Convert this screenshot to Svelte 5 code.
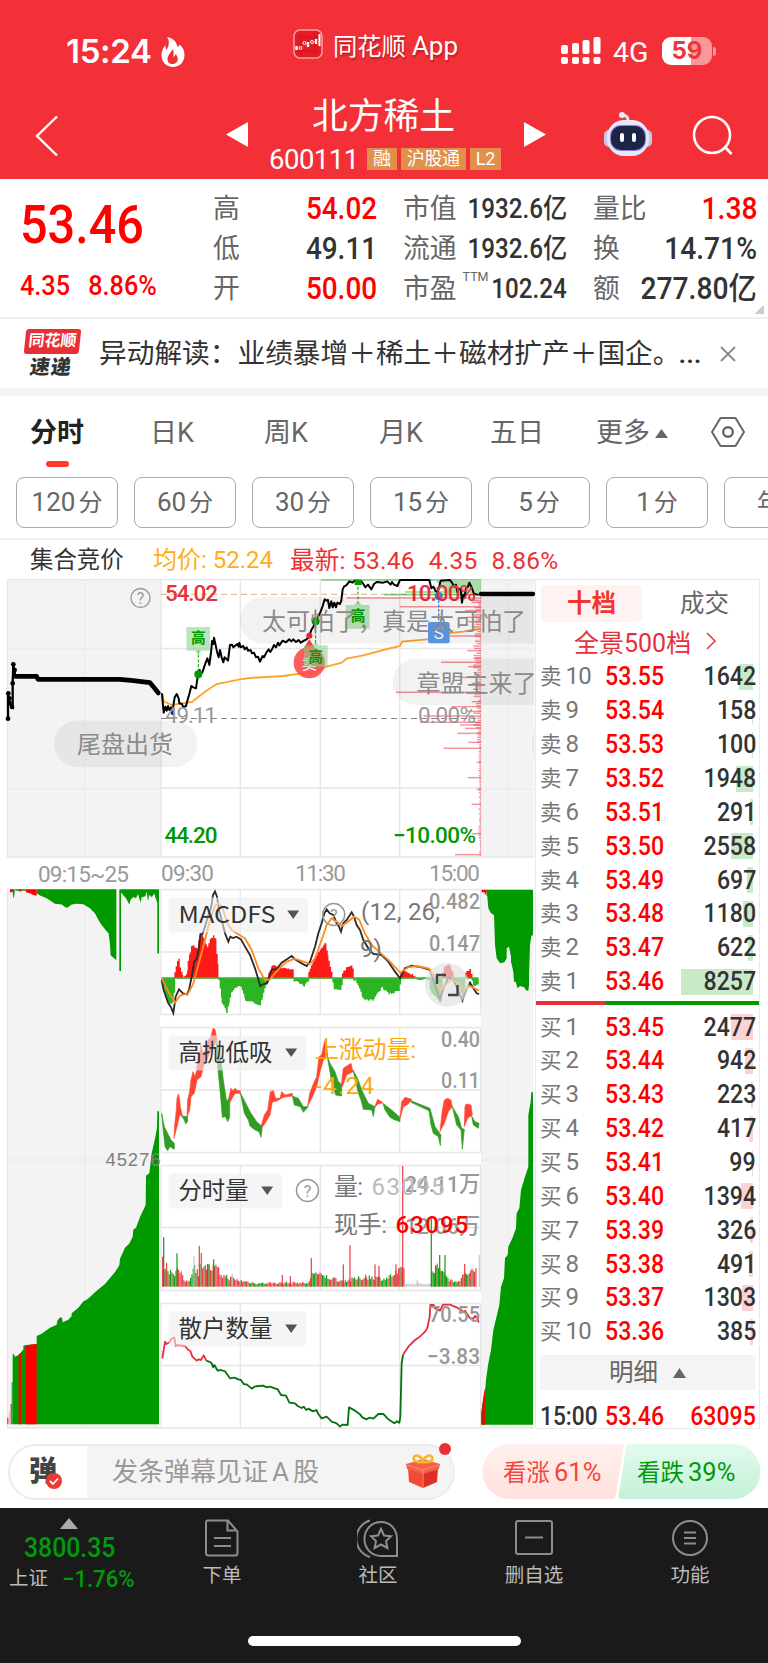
<script>
  const periods = ['120分', '60分', '30分', '15分', '5分', '1分', '年K'];

  const sells = [
    [10, '53.55', 1642], [9, '53.54', 158], [8, '53.53', 100], [7, '53.52', 1948], [6, '53.51', 291],
    [5, '53.50', 2558], [4, '53.49', 697], [3, '53.48', 1180], [2, '53.47', 622], [1, '53.46', 8257],
  ];
  const buys = [
    [1, '53.45', 2477], [2, '53.44', 942], [3, '53.43', 223], [4, '53.42', 417], [5, '53.41', 99],
    [6, '53.40', 1394], [7, '53.39', 326], [8, '53.38', 491], [9, '53.37', 1303], [10, '53.36', 385],
  ];
  const barWidth = (qty) => Math.max(1, (qty / 8257) * 72);

  // small deterministic noise, so the bars do not jump between renders
  let seed = 7;
  function noise() {
    seed = (seed * 16807) % 2147483647;
    return seed / 2147483647;
  }

  // chart series are in thirds of a pixel
  const price = '36,370 38,395 41,428 46,410 50,422 54,408 58,420 63,412 67,432 71,400 74,382 80,372 86,385 88,400 96,402 100,412 108,408 112,392 118,372 124,348 130,352 138,355 144,313 149,300 153,312 158,305 166,280 172,265 178,285 184,240 186,213 190,222 192,203 198,230 201,245 206,262 210,240 215,262 220,277 224,262 228,266 234,272 240,225 246,224 250,232 262,222 266,230 268,218 272,232 280,228 284,238 290,232 294,242 302,240 306,250 312,248 318,262 324,260 330,275 338,258 342,262 350,246 356,238 361,246 366,238 372,225 378,232 384,218 388,226 398,212 408,217 418,208 424,214 430,208 438,216 446,210 452,218 462,212 470,208 478,197 484,180 490,170 497,152 504,140 510,130 518,108 524,88 530,92 534,90 538,114 544,94 548,112 553,98 558,112 562,98 570,102 574,92 578,58 582,50 590,45 598,34 608,38 614,32 634,34 640,42 646,52 654,44 664,58 672,42 680,36 700,38 712,34 722,44 726,36 732,44 742,48 750,30 838,30 844,55 850,50 856,62 862,66 868,48 872,32 900,30 906,38 912,50 918,44 922,66 926,56 932,58 936,98 940,74 944,78 948,55 954,50 958,38 964,50 972,72 986,74';
  const average = '36,370 42,395 66,405 110,398 125,396 140,385 165,365 185,352 200,342 270,328 300,324 350,321 400,318 440,312 480,310 530,290 575,278 590,266 640,256 700,240 750,228 756,215 830,208 850,205 870,192 940,185 970,180 990,177';

  const profile = [
    [84, 590], [97, 965], [110, 750], [122, 945], [142, 950], [155, 955], [178, 972], [198, 855], [242, 952],
    [265, 970], [277, 873], [290, 955], [322, 935], [340, 965], [367, 738], [395, 965], [410, 905], [424, 950],
    [438, 820], [457, 810], [465, 930], [475, 945], [490, 922], [517, 955], [535, 880], [577, 980], [623, 954],
    [658, 980], [703, 965], [791, 965], [854, 915],
  ];
  const ticks = Array.from({ length: 108 }, (_, i) => {
    const y = 84 + i * 7.2;
    return [y, 990 - noise() * (y < 520 ? 22 : 5)];
  });
  const profileTop = [[30, 513], [36, 860], [42, 868], [48, 875], [54, 850], [60, 880], [66, 765], [74, 703]];

  function columns(shape, step = 4) {
    const pts = shape.split(' ').map((p) => p.split(',').map(Number));
    let d = '';
    for (let i = 0; i < pts.length - 1; i++) {
      const [x0, y0] = pts[i];
      const [x1, y1] = pts[i + 1];
      for (let x = x0; x < x1; x += step) {
        const y = y0 + ((y1 - y0) * (x - x0)) / (x1 - x0) + (noise() - 0.5) * 6;
        d += `M${x} 295V${y.toFixed(1)}h${step + 0.3}V295z`;
      }
    }
    return d;
  }
  const macdUp = [
    '58,275 66,242 70,238 74,260 80,285 88,290 96,275 98,240 104,215 110,195 118,200 126,205 134,160 140,165 148,185 156,200 164,180 174,168 180,175 186,250 190,295',
    '340,275 350,255 375,262 395,265 412,270 416,290',
    '460,272 475,240 490,215 500,200 510,190 516,225 524,260 532,290',
    '561,278 575,262 588,258 594,272',
    '736,278 750,272 785,293',
    '862,275 868,262 880,255 892,275 895,290',
    '930,280 935,275 944,268 950,285',
  ].map((s) => columns(s)).join('');
  const macdDown = [
    '20,300 30,350 40,370 52,368 58,320',
    '190,300 200,370 214,398 220,370 226,340 240,325 256,318 264,340 270,360 290,365 300,372 314,375 320,350 330,315 340,300',
    '416,302 440,312 446,318 460,300', '532,310 536,325 555,330 561,305',
    '594,300 600,300 612,325 622,355 640,360 655,360 665,340 680,322 700,342 715,338 730,330 736,305',
    '785,298 820,300 825,335 855,365 862,305', '895,302 905,310 922,350 930,305', '950,300 955,318 970,315',
  ].map((s) => columns(s)).join('');
  const dif = '20,300 26,330 32,348 40,370 48,382 55,399 62,350 72,328 84,340 96,343 102,330 110,290 118,245 126,235 132,200 136,165 142,162 150,140 160,105 168,85 174,45 180,34 186,50 192,90 200,120 210,160 220,185 226,170 234,174 244,170 258,178 270,200 285,225 300,265 316,318 325,312 336,310 346,280 352,268 364,268 380,248 400,235 410,228 420,238 440,250 455,258 465,245 480,200 490,160 500,130 508,100 515,88 524,100 535,105 545,130 552,140 558,155 565,130 575,120 590,97 597,110 605,135 615,150 625,180 640,205 655,222 680,225 700,245 720,275 735,295 750,265 770,257 800,262 825,270 835,300 855,360 865,325 880,292 895,300 905,320 922,362 935,325 945,308 955,325 965,340 972,342';
  const dea = '20,295 40,335 60,368 75,347 100,340 115,310 130,255 150,180 165,120 180,78 190,70 202,80 215,125 230,150 250,163 270,175 290,210 310,265 330,300 345,298 370,268 395,245 420,236 445,245 465,252 480,235 500,180 515,135 530,115 545,125 560,138 575,128 597,110 612,118 630,160 650,195 675,218 700,240 735,278 760,262 785,258 820,265 840,290 858,330 875,310 890,298 910,310 925,330 945,318 972,332';

  const swingUp = [
    '57,775 59,735 64,690 66,655 70,642 74,660 76,680 82,708 74,705 66,740',
    '96,710 98,660 104,635 108,600 114,575 120,590 125,572 128,540 134,520 138,495 144,520 152,510 160,480 168,470 174,445 180,448 186,480 176,500 165,520 155,540 145,560 138,590 126,600 118,640 108,650 104,690',
    '222,650 228,625 234,632 240,625 248,632 256,632 256,640 240,640 224,668',
    '318,740 328,705 338,690 346,635 355,632 362,655 375,655 380,635 390,645 412,640 412,648 384,652 368,662 352,666 345,705 325,738',
    '458,678 464,640 476,610 485,590 492,530 500,525 505,500 512,475 518,525 505,540 495,575 485,620 470,655',
    '560,605 565,565 580,555 588,550 594,575 575,585 562,620',
    '658,683 668,658 684,668 668,673',
    '735,715 740,665 750,652 770,658 760,672 745,680',
    '855,755 862,690 868,660 878,655 888,660 892,680 880,695 868,730',
    '928,740 930,680 934,672 948,675 952,705 938,715',
  ];
  const swingDown = [
    '20,700 28,740 38,760 48,780 58,790 58,808 44,800 38,812 30,800 24,745',
    '80,708 98,710 98,724 92,732 88,720',
    '184,480 195,520 205,600 215,665 224,650 224,712 218,725 212,710 202,712 196,640 188,560',
    '256,638 270,665 285,695 305,725 322,740 318,772 312,755 300,750 285,738 280,720 268,700',
    '412,648 430,655 445,680 460,680 445,697 436,680 418,675',
    '516,525 525,550 540,575 550,605 560,612 560,648 542,645 530,605',
    '594,570 610,600 620,630 640,670 660,680 655,710 650,690 625,688 618,660 610,640',
    '684,670 710,690 735,712 735,725 715,718 705,712 690,690',
    '768,662 825,685 840,740 858,765 856,797 850,770 835,760 828,735 822,692 768,667',
    '892,680 910,710 920,745 928,748 922,808 918,750 905,735',
    '950,708 960,725 972,730 970,745 955,735',
  ];

  // turnover per minute: envelope of [x, height] plus the outstanding spikes
  const envelope = [
    [20, 85], [40, 60], [60, 50], [70, 60], [85, 22], [100, 18], [112, 70], [120, 70], [128, 40], [134, 100],
    [160, 65], [180, 65], [200, 40], [240, 24], [300, 12], [420, 14], [460, 12], [470, 55], [490, 40], [520, 32],
    [560, 20], [640, 34], [690, 28], [745, 60], [749, 10], [826, 10], [830, 65], [866, 62], [875, 25], [910, 20],
    [930, 45], [962, 60],
  ];
  const spikes = [
    [26, 148, '#009900'], [66, 100, '#009900'], [117, 92, '#c4c4c4'], [133, 122, '#e8303a'], [158, 68, '#009900'],
    [176, 82, '#009900'], [232, 38, '#c4c4c4'], [382, 35, '#e8303a'], [406, 32, '#e8303a'], [469, 86, '#e8303a'],
    [565, 67, '#e8303a'], [585, 124, '#e8303a'], [632, 36, '#e8303a'], [660, 67, '#e8303a'], [672, 62, '#e8303a'],
    [723, 67, '#e8303a'], [743, 362, '#e8303a'], [787, 20, '#c4c4c4'], [829, 210, '#009900'], [842, 64, '#009900'],
    [854, 95, '#009900'], [870, 95, '#009900'], [929, 68, '#e8303a'], [973, 95, '#c4c4c4'],
  ];
  const turnover = [];
  for (let x = 21; x < 963; x += 4) {
    const k = envelope.findIndex((e) => e[0] > x);
    const [x0, h0] = envelope[k - 1];
    const [x1, h1] = envelope[k];
    const h = (h0 + ((h1 - h0) * (x - x0)) / (x1 - x0)) * (0.6 + noise() * 0.5);
    const red = noise() > 0.45;
    turnover.push([x, h, x > 748 && x < 827 ? '#c4c4c4' : red ? '#e8303a' : '#009900']);
  }

  const retailGreen = '154,632 165,636 170,640 174,652 178,645 188,662 198,660 210,664 225,685 238,683 250,688 258,690 266,702 276,704 290,716 298,710 310,708 325,707 335,712 345,710 368,718 378,735 393,737 403,758 420,760 428,768 440,774 446,770 454,780 460,776 474,784 484,780 490,792 500,805 515,800 530,815 545,820 555,830 562,824 578,825 582,772 600,782 615,793 622,802 635,808 643,803 655,806 670,792 685,792 700,808 712,816 718,820 726,814 733,818 736,800 740,640 744,615';

  // grid frames of the four lower panels: top, middle, bottom
  const frames = [
    [889.5, 952, 1014.5],
    [1027.5, 1090, 1152.5],
    [1165.5, 1227.5, 1290.5],
    [1303.5, 1365.5, 1428],
  ];
  const scaleLabels = [
    ['0.482', 909, 51], ['0.147', 950.5, 51], ['0.40', 1047, 39], ['0.11', 1088, 39],
    ['24.11万', 1192, 75], ['12.06万', 1233.5, 75], ['70.55', 1322, 51], ['−3.83', 1364, 53],
  ];
  const pickers = [
    ['MACDFS', 897.5, 139.5, 97], ['高抛低吸', 1035.5, 137.5, 94], ['分时量', 1173.5, 113.5, 70], ['散户数量', 1311.5, 137.5, 94],
  ];
</script>

{#snippet level(side, n, cost, qty)}
  <li class="level {side === '卖' ? 'sell' : 'buy'}">
    <span class="level-name">{side}<i>{n}</i></span>
    <span class="level-price">{cost}</span>
    <span class="level-bar" style:width="{barWidth(qty)}px"></span>
    <span class="level-qty">{qty}</span>
  </li>
{/snippet}

<main class="screen">
  <header class="top">
    <div class="status">
      <div class="clock">
        <span>15:24</span>
        <svg width="24" height="30" viewBox="0 0 24 30"><path fill="#fff" d="M6 0c6 1 10 5 10.500 10.500 1-1 1.500-1.500 1.800-3C22 10 23.500 14 23.500 18c0 7-5 12-11.500 12S.5 25 .5 18.500c0-5 2-7.500 4-10.500 0 2 0 3 1 5C8 9 9 4 6 0z" /><path fill="#f33038" d="M12 12c-3.500 5-5.500 7-5.500 10.500 0 3 2.300 4.500 5 4.500s5.300-1.500 5.300-5c0-2-1-4-2.300-5-.5 2-1 2.500-2 3 0-3 .5-5-.5-8z" /></svg>
      </div>
      <div class="app-name">
        <svg width="30" height="30" viewBox="0 0 30 30"><rect x="1" y="1" width="28" height="28" rx="6" fill="#e51c24" stroke="#f9a0a0" stroke-width="1.500" /><path stroke="#c9141c" d="M5 22h20M5 8h20M8 4v22M22 4v22" /><g stroke="#fff" fill="none"><path stroke-width="2.400" d="M3.500 17v4M15 13v5M23 10v5" /><circle cx="7.500" cy="19" r="1.500" /><circle cx="11.500" cy="14" r="1.500" /><circle cx="19" cy="13" r="1.500" /><path d="M26.500 5v12" stroke-width="2" /></g></svg>
        <span>同花顺<b>App</b></span>
      </div>
      <div class="radio">
        <svg width="40" height="28" viewBox="0 0 40 28" fill="#fff">
          <rect x="0" y="8" width="7" height="9" rx="2" /><rect x="11" y="6" width="7" height="11" rx="2" /><rect x="21.500" y="3" width="7" height="14" rx="2" /><rect x="32.500" y="0" width="7" height="17" rx="2" />
          <rect x="0" y="20" width="7" height="7" rx="2" /><rect x="11" y="20" width="7" height="7" rx="2" /><rect x="21.500" y="20" width="7" height="7" rx="2" /><rect x="32.500" y="20" width="7" height="7" rx="2" />
        </svg>
        <span class="network">4G</span>
        <span class="battery">59</span>
        <i class="battery-cap"></i>
      </div>
    </div>

    <div class="nav">
      <svg class="back" width="24" height="42" viewBox="0 0 24 42"><path d="M22 1.500L2 21l20 19.500" fill="none" stroke="#fff" stroke-width="2.400" /></svg>
      <svg class="prev" width="22" height="25"><path fill="#fff" d="M22 0v25L0 12.500z" /></svg>
      <div class="stock">
        <h1>北方稀土</h1>
        <p><span class="code">600111</span><em>融</em><em>沪股通</em><em>L2</em></p>
      </div>
      <svg class="next" width="22" height="25"><path fill="#fff" d="M0 0v25l22-12.500z" /></svg>
      <svg class="robot" width="48" height="45" viewBox="0 0 48 45">
        <path d="M24 9c0-4-1-5-5-6" fill="none" stroke="#dfe4f7" stroke-width="3" /><circle cx="18" cy="3" r="3" fill="#e9ecfa" />
        <rect x="0" y="18" width="10" height="17" rx="5" fill="#c3c9e8" /><rect x="38" y="18" width="10" height="17" rx="5" fill="#c3c9e8" />
        <rect x="3" y="8" width="42" height="36" rx="17" fill="#e6e9f8" /><rect x="6" y="13" width="36" height="26" rx="11" fill="#8b7bf0" />
        <rect x="7" y="14" width="34" height="24" rx="10" fill="#1c2545" /><rect x="16" y="21" width="4" height="9" rx="2" fill="#fff" /><rect x="28" y="21" width="4" height="9" rx="2" fill="#fff" />
      </svg>
      <svg class="search" width="42" height="42" viewBox="0 0 42 42" fill="none" stroke="#fff" stroke-width="2.600"><circle cx="20" cy="20" r="18" /><path d="M33 32l6.500 7" /></svg>
    </div>
  </header>

  <section class="quote">
    <div class="last">
      <strong>53.46</strong>
      <p><span>4.35</span><span>8.86%</span></p>
    </div>
    <dl class="c1">
      <dt>高</dt><dd class="red">54.02</dd>
      <dt>低</dt><dd>49.11</dd>
      <dt>开</dt><dd class="red">50.00</dd>
    </dl>
    <dl class="c2">
      <dt>市值</dt><dd>1932.6亿</dd>
      <dt>流通</dt><dd>1932.6亿</dd>
      <dt>市盈<sup>TTM</sup></dt><dd>102.24</dd>
    </dl>
    <dl class="c3">
      <dt>量比</dt><dd class="red">1.38</dd>
      <dt>换</dt><dd>14.71%</dd>
      <dt>额</dt><dd>277.80亿</dd>
    </dl>
    <i class="corner"></i>
  </section>

  <section class="news">
    <div class="news-logo"><b>同花顺</b><span>速递</span></div>
    <p>异动解读：业绩暴增＋稀土＋磁材扩产＋国企。<span>...</span></p>
    <svg width="16" height="16"><path d="M1 1l14 14M15 1L1 15" stroke="#888" stroke-width="1.800" /></svg>
  </section>

  <nav class="tabs">
    <span class="active">分时</span><span>日K</span><span>周K</span><span>月K</span><span>五日</span>
    <span class="more">更多<svg width="13" height="9"><path fill="#666" d="M6.500 0L13 9H0z" /></svg></span>
    <svg width="34" height="32" viewBox="0 0 34 32" fill="none" stroke="#666" stroke-width="2"><path d="M9.500 2h15L33 16l-8.500 14h-15L1 16z" stroke-linejoin="round" /><circle cx="17" cy="16" r="4.800" stroke-width="2.400" /></svg>
  </nav>

  <div class="periods">
    {#each periods as period}
      <button type="button">{period.replace(/\D/g, '')}<i>{period.replace(/\d/g, '')}</i></button>
    {/each}
  </div>

  <p class="legend">
    <span class="auction">集合竞价</span>
    <span class="avg">均价: 52.24</span>
    <span class="now">最新: 53.46</span>
    <span class="now">4.35</span>
    <span class="now">8.86%</span>
  </p>

  <div class="board">
    <svg class="charts" width="535" height="852" viewBox="0 579 535 852">
      <rect x="7" y="579" width="154" height="278" fill="#f3f3f3" />
      <rect x="481" y="579" width="53.500" height="278" fill="#f3f3f3" />
      <rect x="7" y="889" width="153" height="539" fill="#f3f3f3" />
      <rect x="481" y="889" width="52.500" height="539" fill="#f3f3f3" />
      <g class="grid">
        <path d="M7 579.500H534M7 857H534M161 579V857M481 579V857M7.500 579V857M240.300 579V857M320.300 579V857M399.700 579V857M161 648.500H481M161 788H481" />
        {#each frames as [top, mid, bottom]}
          <path d="M161 {top}H480.500V{bottom}H161zM161 {mid}H480.500M240.300 {top}V{bottom}M320.300 {top}V{bottom}M399.700 {top}V{bottom}" />
        {/each}
        <path d="M7.500 889V1428M7 1428H161M481 1428H534" />
        <path stroke-dasharray="2 2" d="M85 579V857M508.700 579V857M7 649H161M7 789H161M481 649H534M481 789H534M85 889V1428M508.700 889V1428M7 1160H161M481 1160H534" />
      </g>

      <!-- opening auction -->
      <g transform="translate(0 570) scale(.33333)" stroke="#000" fill="none">
        <path stroke-width="7" d="M24 446V370L30 400L38 410V340L40 283L46 318" />
        <path stroke-width="14" stroke-linecap="round" stroke-linejoin="round" d="M46 319H110L114 328H360L400 332L450 338L460 350L475 369" />
        {#each [[24, 446], [25, 370], [28, 385], [29, 400], [36, 411], [38, 340], [40, 283], [44, 300], [43, 318]] as [x, y]}
          <circle cx={x} cy={y} r="7" fill="#000" stroke="none" />
        {/each}
      </g>
      <circle cx="140.500" cy="598" r="9.500" fill="none" stroke="#999" stroke-width="1.300" />
      <text class="mark" x="140.500" y="603.500">?</text>

      <!-- intraday price -->
      <path d="M161 594.300H481" stroke="#dcb183" stroke-dasharray="6 4" fill="none" />
      <path d="M161 718.500H476" stroke="#888" stroke-dasharray="6 4" fill="none" />
      <g transform="translate(150 570) scale(.33333)">
        <g stroke="#ee2030" stroke-opacity=".48" stroke-width="4.500">
          {#each profile as [y, x]}<path d="M{x} {y}H993" />{/each}
          {#each ticks as [y, x]}<path d="M{x} {y}H993" />{/each}
        </g>
        <g stroke="#009900" stroke-opacity=".45" stroke-width="5">
          {#each profileTop as [y, x]}<path d="M{x} {y}H993" />{/each}
        </g>
        <polyline points={average} fill="none" stroke="#ffa32b" stroke-width="5.500" />
        <polyline points={price} fill="none" stroke="#000" stroke-width="6" stroke-linejoin="round" />
        <path d="M993 72H1149" stroke="#000" stroke-width="13" stroke-linecap="round" />
        <path d="M145 240V305M497 154V226M624 37V105" stroke="#009900" stroke-width="3" stroke-dasharray="9 5" />
        <path d="M866 78V156" stroke="#3f82e0" stroke-width="4" stroke-dasharray="8 5" />
        <circle cx="145" cy="313" r="12" fill="#009900" /><circle cx="497" cy="154" r="12" fill="#009900" />
        <rect x="614" y="29" width="21" height="16" fill="#009900" /><circle cx="478" cy="197" r="9" fill="#ff2020" />
        <circle cx="866" cy="78" r="12" fill="#4377c4" />
        <path d="M478 207l18 30h-36z" fill="#fb4040" /><circle cx="478" cy="278" r="47" fill="#fb4a4a" opacity=".9" />
        <text x="478" y="296" font-size="46" fill="#fff" text-anchor="middle">卖</text>
        <g fill="#86cf86" fill-opacity=".55">
          <path d="M109 171h71v71h-25l-10 15l-10-15h-26z" /><path d="M587 105h25l12-12l12 12h23v71h-72z" /><path d="M462 226h25l10-12l10 12h26v64h-71z" />
        </g>
        <g fill="#009900" font-size="44" font-weight="700" text-anchor="middle"><text x="145" y="219">高</text><text x="624" y="154">高</text><text x="497" y="275">高</text></g>
        <rect x="834" y="156" width="65" height="64" rx="6" fill="#5c9bea" />
        <text x="866" y="208" font-size="52" fill="#fff" text-anchor="middle" font-family="Roboto, sans-serif">S</text>
      </g>
      <g class="figure" font-weight="500">
        <text x="165" y="601" textLength="53" fill="#e8303a">54.02</text>
        <text x="407" y="601" textLength="69" fill="#e8303a">10.00%</text>
        <text x="164.500" y="843" textLength="53" fill="#009900">44.20</text>
        <text x="393" y="843" textLength="83" fill="#009900">−10.00%</text>
      </g>
      <g class="figure" fill="#999">
        <text x="165" y="722.500" textLength="52">49.11</text><text x="418" y="722.500" textLength="58">0.00%</text>
        <text x="38" y="882" textLength="91">09:15~25</text><text x="161" y="880.500" textLength="53">09:30</text>
        <text x="295" y="880.500" textLength="51">11:30</text><text x="429" y="880.500" textLength="51">15:00</text>
      </g>

      <!-- bullet comments floating over the price -->
      <g fill="#000" fill-opacity=".052">
        <rect x="54" y="720.500" width="143.500" height="46.500" rx="23" />
        <path d="M263 597H534V643.500H263a23 23 0 0 1 0-46.500z" /><path d="M416 658.500H534V705H416a23 23 0 0 1 0-46.500z" />
        <path d="M534 731q-4 13 0 26z" />
      </g>
      <g fill="#8a8a8a" font-size="24"><text x="77" y="753">尾盘出货</text><text x="262" y="629.500">太可怕了，真是太可怕了</text><text x="416.500" y="691.500">章盟主来了</text></g>

      <!-- auction volumes -->
      <g transform="translate(0 870) scale(.33333 .36324)" fill="#009900">
        <path d="M34 53H44V60L42 75L40 77L38 60zM46 53H78V57H46zM110 53H349V248L342 243L332 235L330 205L326 175L315 163L300 145L285 120L270 105L250 94L230 93L215 95L202 104L195 102L185 95L165 93L140 78L120 70L110 64zM358 53H363V278H358zM363 53H477V230H472V90L466 75L463 65L455 75L448 68L444 85L440 60L436 72L425 75L422 90L414 66L408 78L400 74L392 82L388 95L378 78L363 62z" />
        <path d="M38 1526V1334L42 1332L44 1340L56 1335L70 1320V1310L78 1308L110 1305V1283L125 1277L150 1260L170 1252L172 1240L180 1232H186L188 1245L205 1238L215 1228V1220L235 1205L250 1188L265 1180L290 1158L315 1140L345 1107L358 1088L360 1070L375 1040L388 1028L398 1010L400 990L408 985L420 955L437 922L438 842L448 835L455 780L465 740L471 710L472 664H477V1526z" />
        <path fill="#f00" d="M30 53h8v8h-8zM58 53h6v6h-6zM78 53h32v18l-10-2l-10-5l-12-3zM56 1334l7-3v195h-7zM77 1311l15-4l18-3v222H77zM32 1470h3v56h-3zM22 1508h3v18h-3z" />
        <path d="M28 1490h3v36h-3z" fill="#bbb" /><path d="M35 1410h3v116h-3z" />
      </g>
      <g fill="#009900">
        <path transform="translate(155 880) scale(.33333)" d="M993 29H1134V165L1129 168L1125 195L1122 290V315L1120 333L1112 330L1108 322L1095 318L1088 325L1082 305H1077L1075 275L1068 245V230L1062 200L1055 205V235L1048 247L1035 250L1025 235L1020 195L1017 105L1008 100L1000 85L997 50z" />
        <path transform="translate(155 880) scale(.33333)" fill="#f00" d="M980 29h14v20l-6-12h-8z" />
        <path transform="translate(155 1150) scale(.33333)" d="M1134 -173V824H978V788L991 715L993 690L1000 640L1008 600L1015 540L1033 465L1038 410L1047 385L1050 325L1058 315L1060 290L1072 265L1083 235L1085 190L1093 175L1098 120L1110 80L1120 50V-105L1127 -145L1129 -173z" />
        <path transform="translate(155 1150) scale(.33333)" fill="#f00" d="M982 765L987 730L991 712L991 824H982z" />
      </g>
      <text x="105.500" y="1166" textLength="55" fill="#808080" font-size="18.500" font-family="Liberation Sans, sans-serif">45276</text>

      <!-- indicators -->
      <g transform="translate(155 880) scale(.33333)">
        <path d={macdDown} fill="#2db424" /><path d={macdUp} fill="#ff1a1a" /><path d="M20 294H970" stroke="#2db424" stroke-width="4" />
        <polyline points={dif} fill="none" stroke="#2b2b2b" stroke-width="5.500" />
        <polyline points={dea} fill="none" stroke="#ff8a1f" stroke-width="5.500" />
        {#each swingDown as points}<polygon {points} fill="#339c24" stroke="#339c24" stroke-width="2" />{/each}
        {#each swingUp as points}<polygon {points} fill="#ff4632" stroke="#ff4632" stroke-width="2" />{/each}
      </g>
      <g transform="translate(155 1150) scale(.33333)">
        {#each turnover as [x, h, color]}<rect {x} y={410 - h} width="3.600" height={h} fill={color} fill-opacity=".9" />{/each}
        {#each spikes as [x, h, color]}<rect x={x - 2} y={410 - h} width="4" height={h} fill={color} fill-opacity=".85" />{/each}
        <g fill="none" stroke-width="5.500" stroke-linejoin="round">
          <path stroke="#e8303a" d="M22 625L30 575L34 582L42 578L50 566L58 563L62 588L66 585L90 588L100 600L106 603L112 620L125 632L130 628L138 630L146 616L154 632" />
          <polyline stroke="#077010" points={retailGreen} />
          <path stroke="#e8303a" d="M744 615L750 605L760 590L780 570L792 562L805 550L814 540L818 530L824 500L826 465H836L840 475L855 482L864 464H885L905 472L925 485L930 482L945 505L955 506L960 498L968 505L971 518" />
        </g>
      </g>

      {#each pickers as [name, y, width, length]}
        <g>
          <rect x="168.700" {y} {width} height="35" rx="4" fill="#efefef" fill-opacity=".6" />
          <text x="178.500" y={y + 25.5} textLength={length} lengthAdjust="spacingAndGlyphs" font-size="23.500" fill="#333">{name}</text>
          <path d="M{168.7 + width - 21} {y + 13}h12l-6 8.500z" fill="#555" />
        </g>
      {/each}
      <g fill="none" stroke="#999" stroke-width="1.500"><circle cx="333.700" cy="914.500" r="11" /><circle cx="307.500" cy="1190.500" r="11" /></g>
      <text class="mark" x="333.700" y="920.500">?</text><text class="mark" x="307.500" y="1196.500">?</text>
      <g class="figure">
        <g fill="#999" font-weight="500">
          {#each scaleLabels as [label, y, length]}<text x={480 - length} {y} textLength={length} lengthAdjust="spacingAndGlyphs">{label}</text>{/each}
        </g>
        <g class="param" fill="#777">
          <text x="361" y="920" textLength="79">(12, 26,</text><text x="360" y="957">9)</text>
          <text x="334" y="1195" textLength="29">量:</text><text x="334" y="1232.500" textLength="53">现手:</text>
        </g>
        <g class="param"><text x="371.500" y="1195" textLength="73" fill="#bbb">63095</text><text x="395.500" y="1232.500" textLength="73" fill="#f00" font-weight="500">63095</text></g>
        <g class="param" fill="#ffa70f"><text x="315" y="1058" textLength="101">上涨动量:</text><text x="315" y="1094" textLength="59">-4.24</text></g>
      </g>
      <circle cx="447" cy="985" r="22" fill="#e2e2e2" fill-opacity=".7" />
      <path d="M437 984v-9h9M448 995h9.500v-10" fill="none" stroke="#444" stroke-width="2.400" />
    </svg>

    <aside class="book">
      <div class="book-tabs"><b>十档</b><span>成交</span></div>
      <p class="full-book">全景500档<svg width="10" height="18"><path d="M1 1l8 8-8 8" fill="none" stroke="#e8303a" stroke-width="1.500" /></svg></p>
      <ol>
        {#each sells as [n, cost, qty]}{@render level('卖', n, cost, qty)}{/each}
      </ol>
      <div class="balance"></div>
      <ol>
        {#each buys as [n, cost, qty]}{@render level('买', n, cost, qty)}{/each}
      </ol>
      <p class="detail">明细<svg width="13" height="10"><path fill="#666" d="M6.500 0L13 10H0z" /></svg></p>
      <div class="level trade"><span class="level-time">15:00</span><span class="level-price">53.46</span><span class="level-qty">63095</span></div>
    </aside>
  </div>

  <section class="actions">
    <div class="comment">
      <div class="comment-toggle">
        <b>弹</b>
        <svg width="16" height="16"><circle cx="8" cy="8" r="8" fill="#ee3a35" /><path d="M4 8l3 3 5-5.500" fill="none" stroke="#fff" stroke-width="1.800" /></svg>
      </div>
      <span>发条弹幕见证<i>A</i>股</span>
      <svg class="gift" width="34" height="36" viewBox="0 0 34 36">
        <path d="M2 15l15 5v15L3 29z" fill="#ef4b36" /><path d="M32 15l-15 5v15l14-6z" fill="#dd3024" /><path d="M0 11L17 6l17 5-1 5-16 5L1 16z" fill="#f4614a" /><path d="M17 16v19M33 12l-16 5L1 12" stroke="#ff8a68" fill="none" />
        <path d="M17 9C11 10 6 8 8 4c2-3 8-1 9 5 1-6 7-8 9-5 2 4-3 6-9 5z" fill="none" stroke="#f5b62d" stroke-width="2.400" />
      </svg>
      <i class="dot"></i>
    </div>
    <div class="votes">
      <svg width="279" height="56" viewBox="0 0 279 56">
        <defs>
          <linearGradient id="up" x2="0" y2="1"><stop stop-color="#fff1ee" /><stop offset="1" stop-color="#ffe1dd" /></linearGradient>
          <linearGradient id="down" x2="0" y2="1"><stop stop-color="#e3faee" /><stop offset="1" stop-color="#c3f1d8" /></linearGradient>
        </defs>
        <path fill="url(#up)" d="M28 0H139q3 0 2.600 3L134 51q-.6 4-4 4H28a27.500 27.500 0 0 1 0-55z" />
        <path fill="url(#down)" d="M149 0H251a27.500 27.500 0 0 1 0 55H140q-4 0-3.400-4L144 4q.6-4 5-4z" />
      </svg>
      <span class="bull">看涨<i>61%</i></span><span class="bear">看跌<i>39%</i></span>
    </div>
  </section>

  <footer class="bottom">
    <div class="index">
      <svg width="18" height="11"><path d="M9 0l9 11H0z" fill="#aaa" /></svg>
      <strong>3800.35</strong>
      <p><span>上证</span><b>−1.76%</b></p>
    </div>
    <div class="item">
      <svg width="36" height="38" viewBox="0 0 36 38"><path d="M3 1.500h21l9.500 11V34q0 2.500-2.500 2.500H4.500Q2 36.500 2 34V3.500Q2 1.500 4 1.500M23.500 2v9.500h10" /><path d="M10 19h17M10 27h17" /></svg>
      <span>下单</span>
    </div>
    <div class="item">
      <svg width="42" height="39" viewBox="0 0 42 39"><path d="M13 1.500a19 19 0 0 0 0 36.500M40 37H24C14 37 7.500 29 7.500 20S14 3 24 3s16 8 16 17zM24 10l3 6.500 7 .8-5 4.700 1.400 7L24 25.500 17.600 29 19 22l-5-4.700 7-.8z" /></svg>
      <span>社区</span>
    </div>
    <div class="item">
      <svg width="38" height="36" viewBox="0 0 38 36"><rect x="1" y="1" width="36" height="33" rx="2" /><path d="M10 17.500h18" /></svg>
      <span>删自选</span>
    </div>
    <div class="item">
      <svg width="36" height="38" viewBox="0 0 36 38"><circle cx="18" cy="19" r="17" /><path d="M12 13.500h12M12 19h12M12 24.500h12" /></svg>
      <span>功能</span>
    </div>
    <div class="home-bar"></div>
  </footer>
</main>

<style>
  :global(body) {
    background: #fff;
  }

  .screen {
    width: 768px;
    height: 1663px;
    overflow: hidden;
    font-family: Roboto, 'Noto Sans CJK SC', sans-serif;
    color: #333;
  }

  h1, p, dl, dd, ol {
    margin: 0;
    padding: 0;
    list-style: none;
  }

  i, em {
    font-style: normal;
  }

  svg {
    display: block;
    flex: none;
  }

  /* header */
  .top {
    height: 179px;
    background: #f33038;
    color: #fff;
  }

  .status {
    display: grid;
    grid-template-columns: 293px 268px 1fr;
    height: 84px;
    box-sizing: border-box;
    padding-top: 29px;
  }

  .clock {
    display: flex;
    align-items: center;
    gap: 9px;
    height: 45px;
    padding-left: 66px;
    font: 600 33px/45px Inter, sans-serif;
    letter-spacing: -0.3px;
  }

  .app-name {
    display: flex;
    gap: 10px;
    height: 32px;
    font-size: 24.300px;
    line-height: 34px;
    text-shadow: 1px 2px 2px rgba(90, 0, 0, 0.4);
  }

  .app-name b {
    margin-left: 6px;
    font-weight: 400;
    font-size: 26px;
  }

  .radio {
    display: flex;
    align-items: center;
    height: 44px;
  }

  .network {
    width: 38px;
    margin: 3px 11px 0 12px;
    font-size: 28.500px;
  }

  .battery {
    width: 50px;
    height: 28px;
    border-radius: 9px;
    background: linear-gradient(90deg, #fff 58%, #f9989b 58%);
    color: #f0353d;
    font: 700 24px/28px Inter, sans-serif;
    text-align: center;
  }

  .battery-cap {
    width: 3px;
    height: 9px;
    margin-left: 1px;
    border-radius: 0 4px 4px 0;
    background: #f9989b;
  }

  .nav {
    display: grid;
    grid-template-columns: 190px 58px 276px 80px 87px 1fr;
    align-items: start;
  }

  .back {
    margin: 31px 0 0 35px;
  }

  .prev {
    margin: 38px 0 0 36px;
  }

  .next {
    margin-top: 38px;
  }

  .robot {
    margin-top: 28px;
  }

  .search {
    margin: 31px 0 0 1px;
  }

  .stock {
    display: flex;
    flex-direction: column;
    align-items: center;
  }

  .stock h1 {
    margin: 9px 5px 0 0;
    font-weight: 400;
    font-size: 35.800px;
    line-height: 48px;
  }

  .stock p {
    display: flex;
    align-items: center;
    gap: 4px;
    height: 28px;
    margin: 4px 2px 0 0;
  }

  .code {
    width: 90px;
    margin-right: 4px;
    font-size: 27.500px;
    letter-spacing: -0.500px;
  }

  .stock em {
    box-sizing: border-box;
    height: 22px;
    padding: 0 6px;
    background: #e0904a;
    font-size: 18px;
    line-height: 22px;
    letter-spacing: -0.3px;
  }

  /* quote */
  .quote {
    position: relative;
    display: grid;
    grid-template-columns: 213px 164px 26px 164px 26px 164px;
    height: 140px;
    box-sizing: border-box;
    border-bottom: 2px solid #f0f0f0;
  }

  .last {
    padding-left: 20px;
    color: #f00;
  }

  .last strong {
    display: inline-block;
    margin-top: 14px;
    font-weight: 500;
    font-size: 54px;
    line-height: 64px;
    transform: scaleX(0.9);
    transform-origin: left;
  }

  .last p {
    display: flex;
    width: 152px;
    justify-content: space-between;
    margin-top: 12px;
    font-weight: 500;
    font-size: 28px;
    line-height: 34px;
    transform: scaleX(0.9);
    transform-origin: left;
  }

  dl {
    display: grid;
    grid-template-columns: auto minmax(0, 1fr);
    grid-auto-rows: 40px;
    align-items: center;
    padding-top: 10px;
    line-height: 40px;
  }

  dt {
    font-size: 26.800px;
    color: #666;
    white-space: nowrap;
  }

  dd {
    justify-self: end;
    font-weight: 500;
    font-size: 31px;
    white-space: nowrap;
    transform: scaleX(0.9);
    transform-origin: right;
  }

  .c2 {
    grid-column: 4;
  }

  .c3 {
    grid-column: 6;
  }

  .c2 dd {
    font-size: 27.500px;
    transform: scaleX(0.88);
  }

  .c3 dd {
    transform: scaleX(0.91);
  }

  .red {
    color: #f00;
  }

  sup {
    position: absolute;
    margin: -12px 0 0 6px;
    font-size: 12.500px;
    line-height: 40px;
  }

  .corner {
    position: absolute;
    right: 4px;
    bottom: 3px;
    width: 9px;
    height: 9px;
    background: linear-gradient(135deg, transparent 50%, #ccc 50%);
  }

  /* news */
  .news {
    display: flex;
    align-items: center;
    height: 69px;
    padding-left: 24px;
    border-bottom: 8px solid #f4f4f4;
  }

  .news-logo {
    display: flex;
    flex-direction: column;
    align-items: center;
    width: 57px;
    margin-right: 18px;
    font-weight: 900;
    line-height: 22px;
  }

  .news-logo b {
    width: 55px;
    height: 25px;
    border-radius: 3px;
    background: #ea2e33;
    color: #fff;
    font-size: 16px;
    font-weight: 700;
    line-height: 24px;
    text-align: center;
    transform: skewX(-6deg);
  }

  .news-logo span {
    font-size: 20px;
    letter-spacing: 1px;
    transform: skewX(-8deg);
    margin: 2px 4px 1px 0;
  }

  .news p {
    width: 621px;
    font-size: 27.700px;
    line-height: 40px;
    white-space: nowrap;
  }

  .news p span {
    letter-spacing: 0;
    font-weight: 500;
    margin-left: -2px;
  }

  /* tabs */
  .tabs {
    display: flex;
    height: 81px;
    box-sizing: border-box;
    padding: 17px 0 0 30px;
    font-size: 27px;
    line-height: 40px;
    color: #666;
  }

  .tabs > svg {
    margin: 3px 0 0 1px;
  }

  .tabs span:nth-child(1) { width: 120px; }
  .tabs span:nth-child(2) { width: 114px; }
  .tabs span:nth-child(3) { width: 115px; }
  .tabs span:nth-child(4) { width: 111px; }
  .tabs span:nth-child(5) { width: 106px; }
  .tabs .more {
    display: flex;
    align-items: center;
    gap: 5px;
    width: 114px;
    height: 40px;
  }

  .tabs .active {
    color: #222;
    font-weight: 700;
  }

  .active::after {
    content: '';
    display: block;
    width: 23px;
    height: 6px;
    margin: 8px 0 0 16px;
    border-radius: 3px;
    background: #ff3b30;
  }

  .periods {
    display: flex;
    gap: 16px;
    width: 810px;
    height: 61px;
    padding-left: 16px;
    border-bottom: 2px solid #f0f0f0;
  }

  .periods button {
    flex: none;
    width: 102px;
    height: 51px;
    padding: 0;
    border: 1.500px solid #aaa;
    border-radius: 8px;
    background: #fff;
    color: #666;
    font: 26px/46px Roboto, 'Noto Sans CJK SC', sans-serif;
  }

  .periods i {
    font-size: 24px;
    margin-left: 3px;
  }

  .legend {
    display: flex;
    height: 39px;
    padding-left: 30px;
    font-size: 24px;
    line-height: 41px;
    white-space: pre;
  }

  .legend .auction {
    width: 123px;
    font-size: 23.400px;
  }

  .legend .avg {
    width: 137px;
    color: #ffae1a;
  }

  .legend .now {
    margin-right: 14px;
    color: #ee2f33;
    font-size: 24.500px;
    letter-spacing: 0.25px;
  }

  /* charts */
  .board {
    display: flex;
    height: 852px;
  }

  .charts {
    font-family: 'Noto Sans CJK SC', sans-serif;
  }

  .grid path {
    fill: none;
    stroke: #e6e6e6;
    stroke-width: 1.300;
  }

  .figure text {
    font-family: Roboto, 'Noto Sans CJK SC', sans-serif;
    font-size: 22.500px;
  }

  .figure .param text {
    font-size: 24px;
  }

  .mark {
    font: 16px Roboto, sans-serif;
    fill: #999;
    text-anchor: middle;
  }

  .book {
    width: 225px;
    height: 850px;
    box-sizing: border-box;
    border: 1.500px solid #eaeaea;
    border-left-width: 1px;
  }

  .book-tabs {
    display: grid;
    grid-template-columns: 101px 1fr;
    gap: 24px;
    padding: 5px 16px 0 5px;
    font-size: 24.500px;
    line-height: 37px;
    text-align: center;
    color: #666;
  }

  .book-tabs b {
    border-radius: 4px;
    background: #fff3f2;
    color: #f5352e;
  }

  .full-book {
    display: flex;
    align-items: center;
    gap: 15px;
    height: 36px;
    padding: 1px 0 1px 38px;
    font-size: 25px;
    color: #e8303a;
  }

  .level {
    position: relative;
    display: grid;
    grid-template-columns: 65px 1fr auto;
    align-items: center;
    height: 33.870px;
    padding: 0 3px 0 4px;
    line-height: 33px;
  }

  .level-name {
    font-size: 21.500px;
    color: #777;
  }

  .level-name i {
    margin-left: 4px;
    font-size: 24px;
    letter-spacing: -0.8px;
  }

  .level-price,
  .level-qty,
  .level-time {
    font-weight: 500;
    font-size: 26px;
    transform: scaleX(0.89);
    transform-origin: left;
  }

  .level-price {
    color: #f00;
  }

  .level-qty {
    transform-origin: right;
  }

  .level-time {
    font-size: 25.500px;
  }

  .level-bar {
    position: absolute;
    right: 6px;
    top: 4px;
    height: 26px;
    background: #c9eac9;
  }

  .buy .level-bar {
    background: #fcd3d4;
  }

  .balance {
    height: 4px;
    margin: 2px 0 5.500px;
    background: linear-gradient(90deg, #e8303a 70px, #009900 70px);
  }

  .detail {
    display: flex;
    align-items: center;
    justify-content: center;
    gap: 15px;
    height: 35px;
    margin: 6.500px 4px 9px;
    background: #f4f4f4;
    font-size: 24.500px;
    line-height: 33px;
    color: #666;
  }

  .trade .level-qty {
    color: #f00;
  }

  /* actions */
  .actions {
    display: flex;
    gap: 27px;
    height: 77px;
    padding: 13px 0 0 8px;
    box-sizing: border-box;
  }

  .comment {
    position: relative;
    display: flex;
    align-items: center;
    width: 447px;
    height: 56px;
    box-sizing: border-box;
    border: 2px solid #ececec;
    border-radius: 28px;
    background: #f4f4f4;
    font-size: 26px;
    line-height: 50px;
    color: #999;
  }

  .comment span {
    width: 294px;
  }

  .comment span i {
    margin: 0 4px;
  }

  .comment-toggle {
    display: flex;
    align-items: flex-end;
    width: 58px;
    height: 52px;
    margin-right: 25px;
    padding-left: 19px;
    border-radius: 26px 0 0 26px;
    background: #fff;
  }

  .comment-toggle b {
    color: #444;
    font-size: 28px;
    font-weight: 900;
    line-height: 52px;
  }

  .comment-toggle svg {
    margin: 0 0 9px -11px;
  }

  .gift {
    margin-bottom: 3px;
  }

  .dot {
    position: absolute;
    right: 2px;
    top: -3px;
    width: 12px;
    height: 12px;
    border-radius: 50%;
    background: #ea3035;
  }

  .votes {
    display: grid;
    grid-template-columns: 134px 145px;
    font-size: 23.500px;
    line-height: 57px;
  }

  .votes svg {
    grid-area: 1 / 1 / 2 / 3;
  }

  .votes span {
    grid-row: 1;
    padding-left: 21px;
    z-index: 1;
  }

  .votes i {
    margin-left: 4px;
    font-size: 25.500px;
  }

  .bull { grid-column: 1; color: #f5453c; }
  .bear { grid-column: 2; color: #009a0c; }

  /* bottom bar */
  .bottom {
    display: grid;
    grid-template-columns: 144px repeat(4, 156px);
    grid-template-rows: 128px 10px;
    height: 155px;
    background: #1a1a1a;
    color: #bbb;
    font-size: 19.500px;
  }

  .index svg {
    margin: 10px 0 0 60px;
  }

  .index strong {
    display: block;
    margin: 3px 0 0 24px;
    color: #009a0c;
    font-weight: 500;
    font-size: 27.500px;
    line-height: 32px;
    transform: scaleX(0.9);
    transform-origin: left;
  }

  .index p {
    display: flex;
    padding: 0 0 0 9px;
    line-height: 30px;
  }

  .index p b {
    margin-left: 14px;
    color: #009a0c;
    font-weight: 500;
    font-size: 23.500px;
    transform: scaleX(0.94);
    transform-origin: left;
  }

  .item {
    display: grid;
    grid-template-rows: 60px 15px;
    place-items: center;
    align-content: start;
    line-height: 14px;
  }

  .item svg {
    fill: none;
    stroke: #8d8d8d;
    stroke-width: 2;
  }

  .home-bar {
    grid-area: 2 / 1 / 3 / 6;
    width: 273px;
    margin-left: 248px;
    border-radius: 5px;
    background: #fff;
  }
</style>
